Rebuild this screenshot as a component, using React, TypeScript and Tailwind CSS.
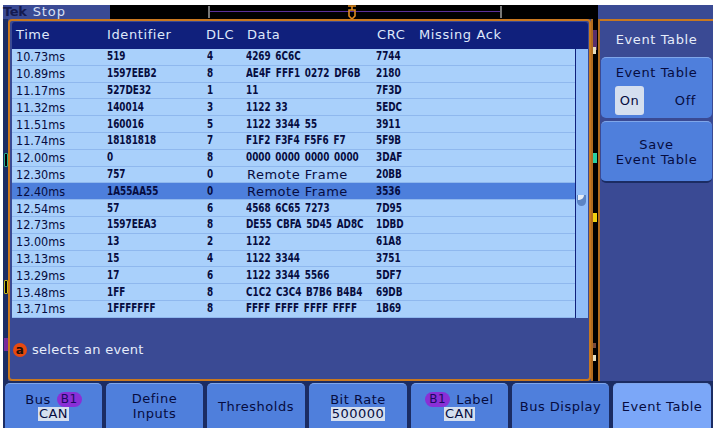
const rows = [
  ["10.73ms", "519", "4", "4269 6C6C", "7744"],
  ["10.89ms", "1597EEB2", "8", "AE4F FFF1 0272 DF6B", "2180"],
  ["11.17ms", "527DE32", "1", "11", "7F3D"],
  ["11.32ms", "140014", "3", "1122 33", "5EDC"],
  ["11.51ms", "160016", "5", "1122 3344 55", "3911"],
  ["11.74ms", "18181818", "7", "F1F2 F3F4 F5F6 F7", "5F9B"],
  ["12.00ms", "0", "8", "0000 0000 0000 0000", "3DAF"],
  ["12.30ms", "757", "0", "Remote Frame", "20BB"],
  ["12.40ms", "1A55AA55", "0", "Remote Frame", "3536"],
  ["12.54ms", "57", "6", "4568 6C65 7273", "7D95"],
  ["12.73ms", "1597EEA3", "8", "DE55 CBFA 5D45 AD8C", "1DBD"],
  ["13.00ms", "13", "2", "1122", "61A8"],
  ["13.13ms", "15", "4", "1122 3344", "3751"],
  ["13.29ms", "17", "6", "1122 3344 5566", "5DF7"],
  ["13.48ms", "1FF", "8", "C1C2 C3C4 B7B6 B4B4", "69DB"],
  ["13.71ms", "1FFFFFFF", "8", "FFFF FFFF FFFF FFFF", "1B69"],
];

// scope font: tall and narrow, wider than any condensed face we have so squeeze it
function Narrow({ children }: { children: string }) {
  return (
    <span className="block origin-left scale-x-[0.82] whitespace-nowrap font-['DejaVu_Sans_Condensed',sans-serif] text-[12px] font-bold leading-[15px] [word-spacing:2px]">
      {children}
    </span>
  );
}

function Row({ r, selected }: { r: string[]; selected: boolean }) {
  const remote = r[3] === "Remote Frame";
  return (
    <div
      className={`flex h-[16.8px] items-center border-b border-[#8fb8ee] text-[#060c40] ${
        selected ? "bg-[#4d7fdc]" : "bg-[#a9d0fb]"
      }`}
    >
      <span className="w-[95px] pl-[4px] font-['DejaVu_Sans_Condensed',sans-serif] text-[12.5px] leading-[15px]">{r[0]}</span>
      <span className="w-[100px]">
        <Narrow>{r[1]}</Narrow>
      </span>
      <span className="w-[39px]">
        <Narrow>{r[2]}</Narrow>
      </span>
      <span className="w-[130px] whitespace-nowrap">
        {remote ? <span className="block pl-[1px] text-[13px] leading-[15px] tracking-[0.5px]">{r[3]}</span> : <Narrow>{r[3]}</Narrow>}
      </span>
      <span className="w-[40px]">
        <Narrow>{r[4]}</Narrow>
      </span>
    </div>
  );
}

function Badge() {
  return (
    <span className="rounded-full bg-[#8a2fd6] px-[4px] text-[12px] leading-[14px] text-[#1a0a60]">B1</span>
  );
}

function Value({ children }: { children: string }) {
  return <span className="bg-[#d5dfef] px-[1px] text-[13px] leading-[14px] text-[#060c40] tracking-[0.5px]">{children}</span>;
}

function SoftKey({
  w,
  active,
  children,
}: {
  w: string;
  active?: boolean;
  children: React.ReactNode;
}) {
  return (
    <div
      className={`flex h-[45px] flex-col items-center justify-center rounded-t-[5px] border-t border-[#7fa6ea] text-[13px] leading-[15px] tracking-[0.5px] text-[#060c40] ${w} ${
        active ? "bg-[#7ba7f8]" : "bg-[#4f7fdc]"
      }`}
    >
      {children}
    </div>
  );
}

export default function App() {
  return (
    <div className="flex h-[428px] w-[715px] flex-col overflow-hidden bg-white pt-[5px] pl-[3px] pr-[2px] font-['DejaVu_Sans',sans-serif]">
      {/* top status strip */}
      <div className="flex h-[14px] shrink-0 bg-black">
        <div className="flex w-[107px] items-center bg-[#3a4a94] text-[13px] leading-[14px] tracking-[0.9px]">
          <span className="text-[13px] font-bold tracking-[-0.3px] text-[#141a50]">Tek</span>
          <span className="ml-[6px] text-[#d8e0f4]">Stop</span>
        </div>
        <div className="relative flex-1">
          <div className="absolute left-[98px] top-[1px] h-[12px] w-[294px] border-x-2 border-[#777]">
            <div className="mt-[5px] h-px bg-[#5a2f9a]" />
          </div>
          <svg className="absolute left-[238px] top-0" width="8" height="14" viewBox="0 0 8 14">
            <path d="M0 1h8M4 1v4M1 5h6v6l-3 3-3-3z" fill="none" stroke="#e08a1e" strokeWidth="1.6" />
          </svg>
        </div>
        <div className="w-[115px] bg-[#3a4a94]" />
      </div>

      {/* main row */}
      <div className="flex h-[362px] shrink-0 bg-[#3a4a94]">
        <div className="relative w-[5px] shrink-0 bg-[#1b2c63]">
          <div className="absolute left-[1px] top-[134px] h-[14px] w-[4px] rounded-[1px] border border-[#2aa88c] bg-black" />
          <div className="absolute left-[1px] top-[261px] h-[14px] w-[4px] rounded-[1px] border border-[#c8b818] bg-black" />
          <div className="absolute left-[1px] top-[319px] h-[13px] w-[4px] bg-[#7a2a9a]" />
        </div>
        <div className="w-[583px] rounded-[4px] border-2 border-[#c9781f] bg-[#3a4a94] pt-[1px] pl-[2px] pr-[1px]">
          <div className="relative rounded-t-[3px] bg-[#10207c]">
            <div className="flex h-[25px] items-center text-[13px] tracking-[0.6px] text-[#dfe8fa]">
              <span className="w-[95px] pl-[4px]">Time</span>
              <span className="w-[99px]">Identifier</span>
              <span className="w-[41px]">DLC</span>
              <span className="w-[130px]">Data</span>
              <span className="w-[42px]">CRC</span>
              <span>Missing Ack</span>
            </div>
            <div className="flex border-t-[2px] border-[#10207c]">
              <div className="flex-1">
                {rows.map((r) => (
                  <Row key={r[0]} r={r} selected={r[0] === "12.40ms"} />
                ))}
              </div>
              <div className="relative w-[13px] border-l border-[#10207c] bg-[#92bdf8]">
                <div className="absolute left-[1px] top-[146px] h-[11px] w-[9px] rounded-b-full bg-[#5c84c4]">
                  <div className="ml-[1px] h-[5px] w-[6px] rounded-br-full bg-[#e4ecf8]" />
                </div>
              </div>
            </div>
          </div>
          <div className="mt-[22px] flex items-center pl-[1px] text-[13px] tracking-[0.3px] text-[#e6ecfa]">
            <span className="mr-[5px] flex h-[14px] w-[14px] items-center justify-center rounded-full bg-[#e8490f] text-[12px] font-bold leading-none text-[#20100a]">
              a
            </span>
            selects an event
          </div>
        </div>

        {/* center strip */}
        <div className="relative w-[9px] shrink-0 border-x-2 border-[#b06c20] bg-black">
          <div className="absolute left-0 top-[11px] h-[20px] w-[4px] bg-[#5a2f6a]" />
          <div className="absolute left-0 top-[28px] h-[7px] w-[3px] bg-[#e8e0c0]" />
          <div className="absolute left-0 top-[134px] h-[10px] w-[4px] bg-[#2ad0a0]" />
          <div className="absolute left-0 top-[194px] h-[9px] w-[4px] bg-[#f0d010]" />
          <div className="absolute left-0 top-[324px] h-[5px] w-[3px] bg-[#7a4a3a]" />
          <div className="absolute left-0 top-[336px] h-[6px] w-[3px] bg-[#e8e0c0]" />
        </div>

        {/* side menu */}
        <div className="flex flex-1 flex-col border-t-2 border-[#c9781f] pt-[11px] pl-[1px] pr-[1px] text-[13px] leading-[15px] tracking-[0.6px]">
          <div className="h-[25px] text-center text-[#e6ecfa]">Event Table</div>
          <div className="flex h-[61px] flex-col rounded-[5px] border-t border-[#7fa6ea] bg-[#4f7fdc] text-[#060c40]">
            <div className="mt-[7px] text-center">Event Table</div>
            <div className="mt-[6px] flex items-center px-[14px]">
              <span className="flex h-[29px] w-[29px] items-center justify-center rounded-[3px] bg-[#d5dfef]">On</span>
              <span className="ml-auto mr-[2px]">Off</span>
            </div>
          </div>
          <div className="mt-[3px] flex h-[62px] flex-col items-center justify-center rounded-[5px] border-t border-[#7fa6ea] border-b-2 border-b-[#1b2c63] bg-[#4f7fdc] text-[#060c40]">
            <span>Save</span>
            <span>Event Table</span>
          </div>
        </div>
      </div>

      {/* bottom softkeys */}
      <div className="flex flex-1 gap-[4px] bg-[#1b2c63] pt-[2px] pl-[2px]">
        <SoftKey w="w-[97px]">
          <span className="flex gap-[6px]">
            Bus <Badge />
          </span>
          <Value>CAN</Value>
        </SoftKey>
        <SoftKey w="w-[97px]">
          <span>Define</span>
          <span>Inputs</span>
        </SoftKey>
        <SoftKey w="w-[98px]">Thresholds</SoftKey>
        <SoftKey w="w-[98px]">
          <span>Bit Rate</span>
          <Value>500000</Value>
        </SoftKey>
        <SoftKey w="w-[97px]">
          <span className="flex gap-[6px]">
            <Badge /> Label
          </span>
          <Value>CAN</Value>
        </SoftKey>
        <SoftKey w="w-[97px]">Bus Display</SoftKey>
        <SoftKey w="w-[98px]" active>
          Event Table
        </SoftKey>
      </div>
    </div>
  );
}
